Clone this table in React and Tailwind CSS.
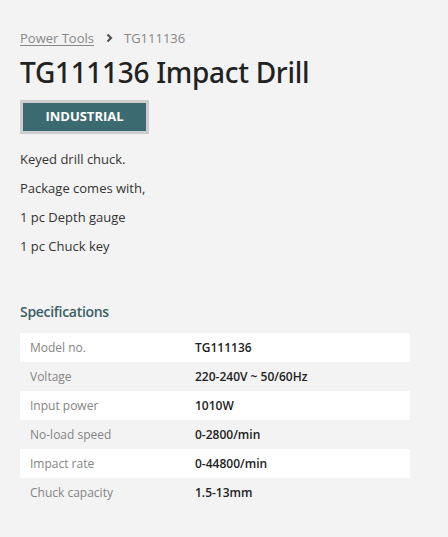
const specs = [
  ["Model no.", "TG111136"],
  ["Voltage", "220-240V ~ 50/60Hz"],
  ["Input power", "1010W"],
  ["No-load speed", "0-2800/min"],
  ["Impact rate", "0-44800/min"],
  ["Chuck capacity", "1.5-13mm"],
];

export default function App() {
  return (
    <div className="min-h-[537px] w-full bg-[#f3f3f3] px-5 pt-[29px] pb-8 font-['Open_Sans',sans-serif] text-[#333]">
      <div className="flex items-center text-[13px] leading-[18px] text-[#888]">
        <a href="#" className="underline underline-offset-2">Power Tools</a>
        <svg className="ml-[12px] mr-[10px] h-[10px] w-[8px] text-[#555]" viewBox="0 0 8 10" fill="none" stroke="currentColor" strokeWidth="2.2">
          <path d="M1.5 1.5L5 5 1.5 8.5" />
        </svg>
        <span>TG111136</span>
      </div>
      <h1 className="mt-[7px] text-[28px] font-medium leading-[36px] tracking-[-0.3px] text-[#222] font-['Noto_Sans',sans-serif]">
        TG111136 Impact Drill
      </h1>
      <div className="mt-[10px] flex h-[34px] w-[129px] items-center justify-center border-[3px] border-[#cdcdcd] bg-[#3b6b70] text-[13px] font-bold text-white">
        INDUSTRIAL
      </div>
      <div className="mt-[16px] flex flex-col gap-[10px] text-[13px] leading-[19px] text-[#333]">
        <p>Keyed drill chuck.</p>
        <p>Package comes with,</p>
        <p>1 pc Depth gauge</p>
        <p>1 pc Chuck key</p>
      </div>
      <h2 className="mt-[46px] text-[14px] font-semibold leading-[20px] tracking-[-0.3px] text-[#3a5f66]">Specifications</h2>
      <div className="mt-[11px] w-[390px] text-[12px]">
        {specs.map(([label, value], i) => (
          <div key={label} className={"flex h-[29px] items-center " + (i % 2 === 0 ? "bg-white" : "bg-[#f3f3f3]")}>
            <span className="w-[175px] pl-[10px] font-medium text-[#858585]">{label}</span>
            <span className="font-semibold text-[#222]">{value}</span>
          </div>
        ))}
      </div>
    </div>
  );
}
